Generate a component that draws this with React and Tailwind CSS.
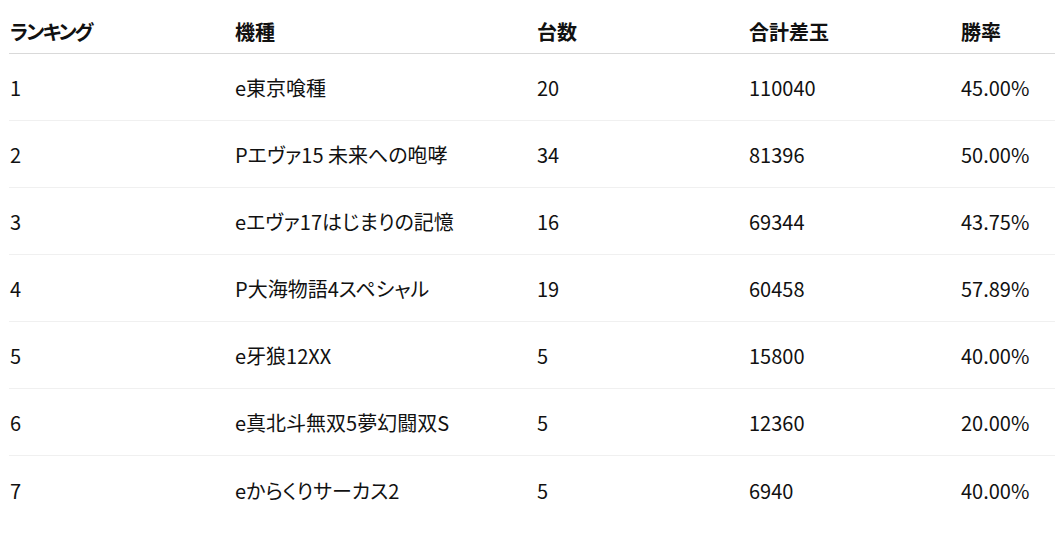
import React from "react";

const rows = [
  ["1", "e東京喰種", "20", "110040", "45.00%"],
  ["2", "Pエヴァ15 未来への咆哮", "34", "81396", "50.00%"],
  ["3", "eエヴァ17はじまりの記憶", "16", "69344", "43.75%"],
  ["4", "P大海物語4スペシャル", "19", "60458", "57.89%"],
  ["5", "e牙狼12XX", "5", "15800", "40.00%"],
  ["6", "e真北斗無双5夢幻闘双S", "5", "12360", "20.00%"],
  ["7", "eからくりサーカス2", "5", "6940", "40.00%"],
];

const headers = ["ランキング", "機種", "台数", "合計差玉", "勝率"];
const cols = "grid grid-cols-[225px_302px_212px_212px_1fr]";

export default function App() {
  return (
    <div
      className="w-[1055px] h-[547px] bg-white pt-[9px] pl-[9px] text-[#111] overflow-hidden"
      style={{ fontFamily: '"Noto Sans CJK JP", "Noto Sans", sans-serif', fontFeatureSettings: '"palt"' }}
    >
      <div className={`${cols} h-[45px] items-center border-b border-[#d9d9d9] font-bold text-[20px]`}>
        {headers.map((h, j) => (
          <div key={h} className={`pl-[1px] pt-[1px] ${j === 0 ? "tracking-[-2px]" : ""}`}>{h}</div>
        ))}
      </div>
      {rows.map((r, i) => (
        <div
          key={i}
          className={`${cols} h-[67px] items-center text-[20px] ${i < rows.length - 1 ? "border-b border-[#f0f0f0]" : ""}`}
        >
          {r.map((c, j) => (
            <div key={j} className="pl-[1px] pt-[2px]">{c}</div>
          ))}
        </div>
      ))}
    </div>
  );
}
